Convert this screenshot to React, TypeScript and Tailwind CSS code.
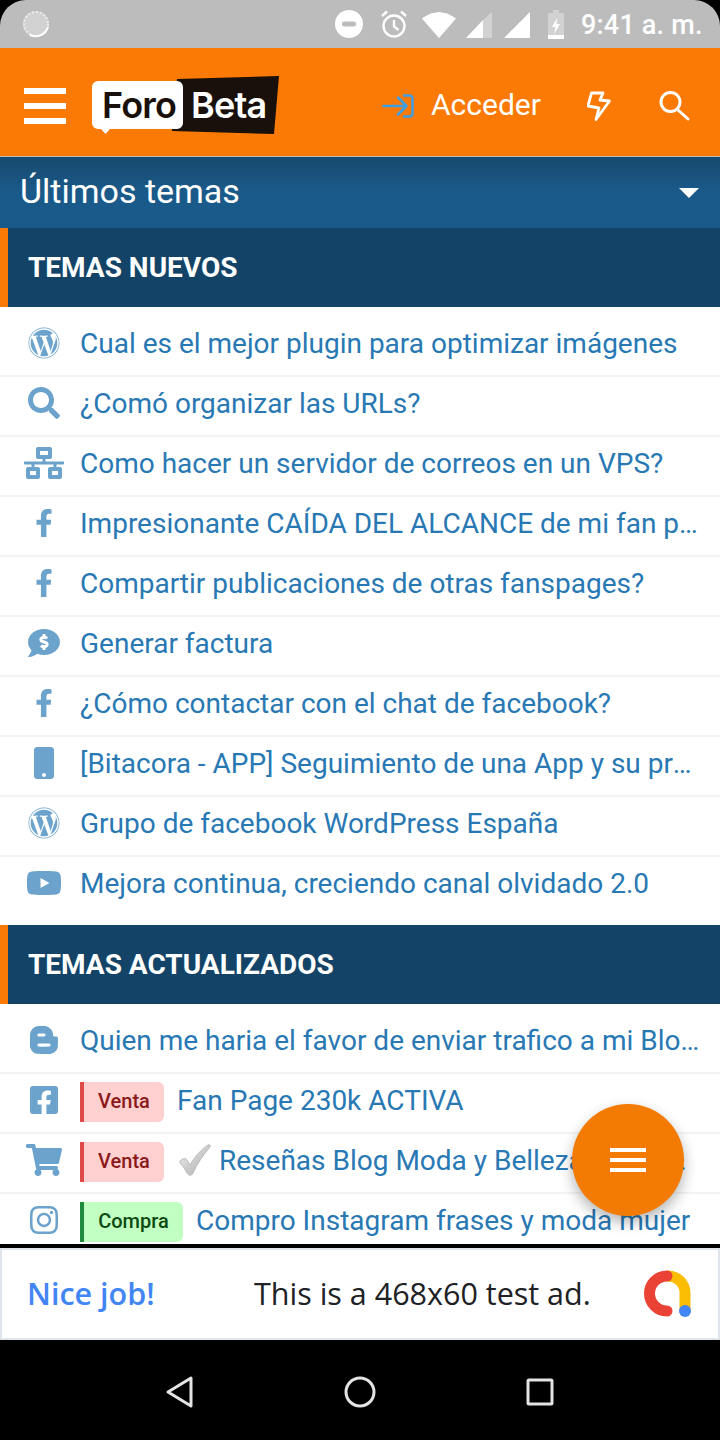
import type { ReactNode } from "react";
import {
  FaBloggerB,
  FaCommentDollar,
  FaFacebookF,
  FaFacebookSquare,
  FaInstagram,
  FaMobile,
  FaNetworkWired,
  FaSearch,
  FaShoppingCart,
  FaWordpress,
  FaYoutube,
} from "react-icons/fa";

const ICON = "text-[#6ba3cc]";

const NUEVOS: { icon: ReactNode; text: string }[] = [
  { icon: <FaWordpress size={32} className={ICON} />, text: "Cual es el mejor plugin para optimizar imágenes" },
  { icon: <FaSearch size={32} className={ICON} />, text: "¿Comó organizar las URLs?" },
  { icon: <FaNetworkWired size={40} className={ICON} />, text: "Como hacer un servidor de correos en un VPS?" },
  { icon: <FaFacebookF size={28} className={ICON} />, text: "Impresionante CAÍDA DEL ALCANCE de mi fan page en facebook" },
  { icon: <FaFacebookF size={28} className={ICON} />, text: "Compartir publicaciones de otras fanspages?" },
  { icon: <FaCommentDollar size={32} className={ICON} />, text: "Generar factura" },
  { icon: <FaFacebookF size={28} className={ICON} />, text: "¿Cómo contactar con el chat de facebook?" },
  { icon: <FaMobile size={32} className={ICON} />, text: "[Bitacora - APP] Seguimiento de una App y su progreso mensual" },
  { icon: <FaWordpress size={32} className={ICON} />, text: "Grupo de facebook WordPress España" },
  { icon: <FaYoutube size={36} className={ICON} />, text: "Mejora continua, creciendo canal olvidado 2.0" },
];

function Badge({ kind }: { kind: "Venta" | "Compra" }) {
  const venta = kind === "Venta";
  return (
    <span
      className={
        venta
          ? "mt-1 flex h-10 w-[84px] shrink-0 items-center justify-center rounded-r-md border-l-4 border-[#dc4a4a] bg-[#ffd0d0] pb-0.5 text-[20px] font-medium text-[#8b1a1a]"
          : "mt-1 flex h-10 w-[103px] shrink-0 items-center justify-center rounded-r-md border-l-4 border-[#1e8a3c] bg-[#c2ffc2] pb-0.5 text-[20px] font-medium text-[#0b4a10]"
      }
    >
      {kind}
    </span>
  );
}

function Row({ icon, last, children }: { icon: ReactNode; last?: boolean; children: ReactNode }) {
  return (
    <div className={last ? "flex h-[60px] items-center pb-2" : "flex h-[60px] items-center border-b-2 border-[#f4f4f4] pb-1.5"}>
      <div className="flex w-[88px] shrink-0 items-center justify-center">{icon}</div>
      <div className="-ml-2 flex min-w-0 flex-1 items-center pr-5 text-[28px] text-[#2878b4]">{children}</div>
    </div>
  );
}

function SectionHead({ title }: { title: string }) {
  return (
    <div className="flex h-[79px] shrink-0 items-center border-l-8 border-[#fb7a06] bg-[#134467] pl-5 text-[28px] font-bold text-white">
      {title}
    </div>
  );
}

function StatusBar() {
  return (
    <div className="flex h-12 shrink-0 items-center rounded-t-[26px] bg-[#bcbcbc] pl-[22px] text-white">
      <svg width="28" height="28" viewBox="0 0 28 28">
        <circle cx="14" cy="14" r="13" fill="#d2d2d2" />
        <circle cx="14" cy="14" r="12" fill="none" stroke="#ececec" strokeWidth="2" strokeDasharray="2 2" />
        <path d="M26 17a13 13 0 0 1-18 8" fill="none" stroke="#fff" strokeWidth="2" />
      </svg>
      <svg width="28" height="28" viewBox="0 0 28 28" className="ml-[285px]">
        <circle cx="14" cy="14" r="14" fill="#fff" />
        <rect x="7" y="11.5" width="14" height="5" rx="2" fill="#bcbcbc" />
      </svg>
      <svg width="28" height="28" viewBox="0 0 28 28" fill="none" stroke="#fff" strokeWidth="2.4" className="ml-[17px]">
        <circle cx="14" cy="16" r="10.5" />
        <path d="M14 10v6.5l4.5 3.5M2 6l5-4.5M26 6l-5-4.5" />
      </svg>
      <svg width="34" height="28" viewBox="0 0 34 28" className="ml-[14px]">
        <path d="M17 27.5 0.5 8.5Q17-3.5 33.5 8.5Z" fill="#fff" stroke="#fff" strokeLinejoin="round" />
      </svg>
      <svg width="26" height="26" viewBox="0 0 26 26" className="ml-[10px] mt-[2px]">
        <path d="M0 26 17 8v18Z" fill="#fff" />
        <path d="M17 8 26 0v26h-9Z" fill="#d2d2d2" />
      </svg>
      <svg width="26" height="26" viewBox="0 0 26 26" className="ml-[12px] mt-[2px]">
        <path d="M0 26 26 0v26Z" fill="#fff" />
      </svg>
      <svg width="16" height="29" viewBox="0 0 16 29" className="ml-[18px]">
        <path d="M5 0h6v3h5v26H0V3h5Z" fill="#d2d2d2" />
        <path d="M0 25h16v4H0Z" fill="#fff" />
        <path d="M9 8 4 17h3.5L6 24l6-10H8.500Z" fill="#fff" />
      </svg>
      <span className="ml-[17px] pt-0.5 text-[27px] font-medium tracking-[0.2px]">9:41 a. m.</span>
    </div>
  );
}

function Logo() {
  return (
    <div className="relative ml-[26px] h-[60px] w-[188px] shrink-0">
      <svg width="188" height="60" viewBox="0 0 188 60" className="absolute inset-0">
        <path d="M85 3 187 0l-5 58-102-3Z" fill="#1a100b" />
        <path d="M6 5h79a6 6 0 0 1 6 6v36a6 6 0 0 1-6 6H18l-4.500 5-4.500-5H6a6 6 0 0 1-6-6V11a6 6 0 0 1 6-6Z" fill="#fff" />
      </svg>
      <span className="absolute left-[10px] top-[7px] text-[36px] font-semibold leading-[44px] tracking-[-0.8px] text-[#1a100b] [font-family:Inter,sans-serif]">Foro</span>
      <span className="absolute left-[99px] top-[7px] text-[36px] font-semibold leading-[44px] tracking-[-0.8px] text-white [font-family:Inter,sans-serif]">Beta</span>
    </div>
  );
}

function Header() {
  return (
    <div className="flex h-[109px] shrink-0 items-center border-b border-[#c9c2b8] bg-[#fb7a06] pl-6 pt-2 text-white">
      <div className="flex w-[42px] shrink-0 flex-col gap-[9px]">
        <span className="h-[6px] bg-white" />
        <span className="h-[6px] bg-white" />
        <span className="h-[6px] bg-white" />
      </div>
      <Logo />
      <svg width="32" height="24" viewBox="0 0 32 24" fill="none" stroke="#3c9fe6" strokeWidth="2.5" strokeLinecap="round" strokeLinejoin="round" className="ml-[102px] shrink-0">
        <path d="M1.500 12h23M16 3.500l8.500 8.500-8.500 8.500M22 1.500h5.500a3 3 0 0 1 3 3v15a3 3 0 0 1-3 3H22" />
      </svg>
      <span className="-mt-1 ml-[17px] text-[30px]">Acceder</span>
      <svg width="24" height="30" viewBox="0 0 24 30" fill="none" stroke="#fff" strokeWidth="2.8" strokeLinejoin="round" className="ml-[46px] shrink-0">
        <path d="M4.500 2H16l-3 7 9.500 1L9 28.500 12 17l-11-2Z" />
      </svg>
      <svg width="32" height="32" viewBox="0 0 32 32" fill="none" stroke="#fff" strokeWidth="3" strokeLinecap="round" className="ml-[48px] shrink-0">
        <circle cx="11.500" cy="12" r="9.500" />
        <path d="M19 20l10 9" />
      </svg>
    </div>
  );
}

function CheckMark() {
  return (
    <svg width="32" height="32" viewBox="0 0 32 32" className="ml-[2px] mr-[8px] shrink-0">
      <defs>
        <linearGradient id="chk" x1="0" y1="0" x2="1" y2="1">
          <stop offset="0" stopColor="#f2f2f2" />
          <stop offset="1" stopColor="#a8a8a8" />
        </linearGradient>
      </defs>
      <path d="M1 17c3-3 6-3 7-1l3 5C16 12 23 5 29 1c2-1 3 1 2 2-7 8-13 17-17 26-1 3-4 3-6 0-2-4-4-7-7-10Z" fill="url(#chk)" stroke="#bbb" strokeWidth="1" />
    </svg>
  );
}

function AdBanner() {
  return (
    <div className="flex h-[92px] shrink-0 items-center border-2 border-[#dfe5ea] bg-white pl-[25px] pr-[26px] text-[30.500px] [font-family:'Open_Sans',sans-serif]">
      <span className="w-[227px] shrink-0 font-semibold text-[#4285f4]">Nice job!</span>
      <span className="text-[#202124]">This is a 468x60 test ad.</span>
      <svg width="48" height="48" viewBox="0 0 48 48" className="ml-auto">
        <path d="M24 6a17 17 0 0 1 17 17v17" fill="none" stroke="#fbbc04" strokeWidth="11" strokeLinecap="round" />
        <path d="M23 6a17 17 0 1 0 0 35" fill="none" stroke="#ea4335" strokeWidth="11" strokeLinecap="round" />
        <circle cx="41" cy="41" r="6" fill="#4285f4" />
      </svg>
    </div>
  );
}

function NavBar() {
  return (
    <div className="flex h-[100px] shrink-0 items-center justify-center gap-[148px] bg-black pt-1">
      <svg width="32" height="32" viewBox="0 0 32 32" fill="none" stroke="#e4e4e4" strokeWidth="3" strokeLinejoin="round">
        <path d="M27 2v28L4 16Z" />
      </svg>
      <svg width="32" height="32" viewBox="0 0 32 32" fill="none" stroke="#e4e4e4" strokeWidth="3">
        <circle cx="16" cy="16" r="14" />
      </svg>
      <svg width="32" height="32" viewBox="0 0 32 32" fill="none" stroke="#e4e4e4" strokeWidth="3" strokeLinejoin="round">
        <rect x="4" y="4" width="24" height="24" rx="1" />
      </svg>
    </div>
  );
}

export default function App() {
  return (
    <div className="relative flex h-[1440px] w-[720px] flex-col overflow-hidden bg-black [font-family:Roboto,sans-serif]">
      <StatusBar />
      <Header />
      <div className="flex h-[71px] shrink-0 items-center justify-between bg-gradient-to-b from-[#174a6e] via-[#1a5a8a] to-[#1a5a8a] pl-5 pr-[21px] text-white">
        <span className="-mt-0.5 text-[34px]">Últimos temas</span>
        <span className="h-0 w-0 border-x-[10px] border-t-[10px] border-x-transparent border-t-white" />
      </div>

      <div className="h-[1016px] shrink-0 overflow-hidden bg-white">
        <SectionHead title="TEMAS NUEVOS" />
        <div className="pb-2 pt-2.5">
          {NUEVOS.map((r, i) => (
            <Row key={i} icon={r.icon} last={i === NUEVOS.length - 1}>
              <span className="truncate pt-0.5">{r.text}</span>
            </Row>
          ))}
        </div>

        <SectionHead title="TEMAS ACTUALIZADOS" />
        <div className="pt-2.5">
          <Row icon={<FaBloggerB size={32} className={ICON} />}>
            <span className="truncate pt-0.5">Quien me haria el favor de enviar trafico a mi Blog de moda</span>
          </Row>
          <Row icon={<FaFacebookSquare size={32} className={ICON} />}>
            <Badge kind="Venta" />
            <span className="ml-[13px] truncate pt-0.5">Fan Page 230k ACTIVA</span>
          </Row>
          <Row icon={<FaShoppingCart size={36} className={ICON} />}>
            <Badge kind="Venta" />
            <span className="ml-[13px] mr-1 flex min-w-0 items-center">
              <CheckMark />
              <span className="truncate pt-0.5">Reseñas Blog Moda y Belleza en Madrid</span>
            </span>
          </Row>
          <Row icon={<FaInstagram size={32} className={ICON} />}>
            <Badge kind="Compra" />
            <span className="ml-[13px] truncate pt-0.5">Compro Instagram frases y moda mujer</span>
          </Row>
        </div>
      </div>

      <div className="h-1 shrink-0 bg-black" />
      <AdBanner />
      <NavBar />

      <button className="absolute left-[572px] top-[1104px] flex h-28 w-28 flex-col items-center justify-center gap-[6px] rounded-full bg-[#f37a03] shadow-[0_6px_14px_rgba(0,0,0,0.3)]">
        <span className="h-1 w-9 bg-white" />
        <span className="h-1 w-9 bg-white" />
        <span className="h-1 w-9 bg-white" />
      </button>
    </div>
  );
}
